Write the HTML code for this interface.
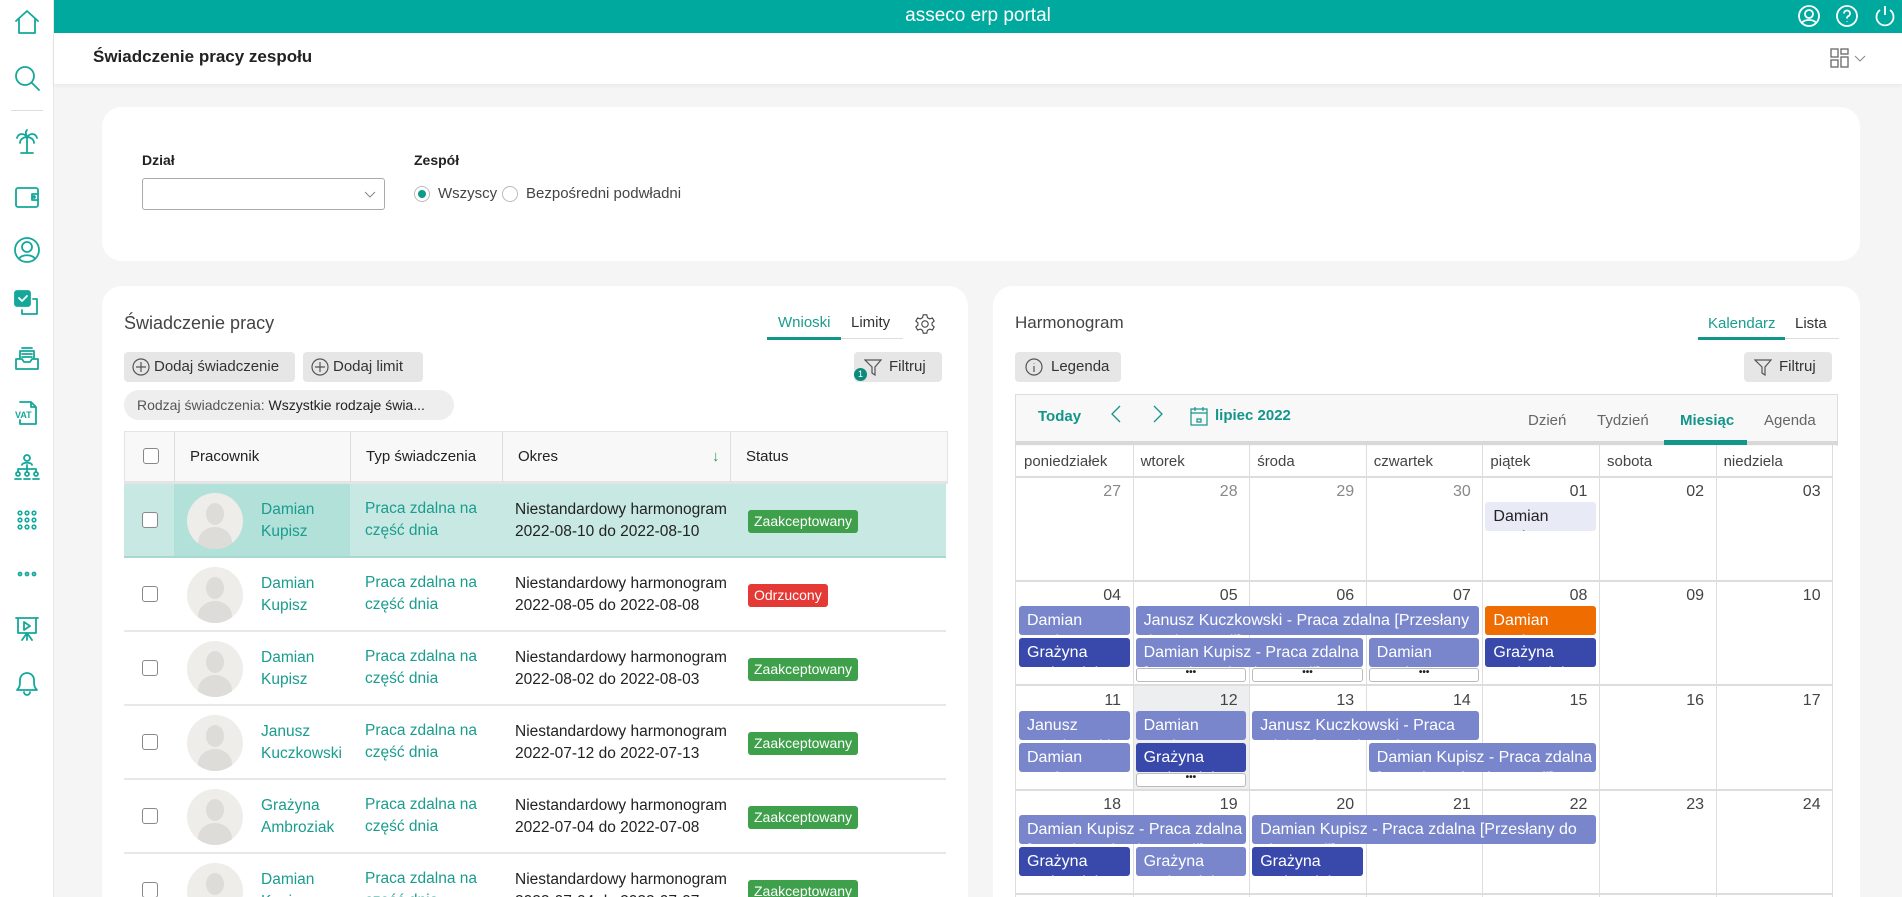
<!DOCTYPE html>
<html><head><meta charset="utf-8"><style>
*{box-sizing:border-box;margin:0;padding:0}
html{width:1902px;height:897px;overflow:hidden}
body{width:1902px;height:897px;overflow:hidden;background:#f5f5f5;font-family:"Liberation Sans",Arial,sans-serif;color:#222;position:relative}
.a{position:absolute}
.side{left:0;top:0;width:54px;height:897px;background:#fff;border-right:1px solid #e6e6e6}
.side svg{position:absolute;left:12px;width:30px;height:30px;fill:none;stroke:#14a89a;stroke-width:1.8;stroke-linecap:round;stroke-linejoin:round}
.top{left:54px;top:0;width:1848px;height:33px;background:#00a99d;color:#fff;text-align:center;font-size:19px;line-height:31px}
.top svg{position:absolute;top:4px;width:24px;height:24px;fill:none;stroke:#fff;stroke-width:1.8}
.hdr{left:54px;top:33px;width:1848px;height:51px;background:#fff;box-shadow:0 2px 4px rgba(0,0,0,.05)}
.card{background:#fff;border-radius:20px}
.btn{background:#e6e6e6;border-radius:4px;height:30px;font-size:15px;line-height:30px;color:#333;padding-left:30px}
.btn svg{position:absolute;left:8px;top:6px;width:18px;height:18px;fill:none;stroke:#555;stroke-width:1.2}
.th{top:431px;height:53px;background:#f8f8f8;border-top:1px solid #e4e4e4;border-bottom:3px solid #e4e4e4;font-size:15px;line-height:49px;color:#222}
.cb{width:16px;height:16px;border:1.5px solid #888;border-radius:3px;background:#fff}
.row{left:124px;width:822px;height:74px;border-bottom:2px solid #e8e8e8;font-size:15.5px;line-height:22px}
.av{left:63px;top:9px;width:56px;height:56px;border-radius:50%;background:#eeedea;overflow:hidden}
.av i{position:absolute;left:19px;top:10px;width:18px;height:22px;border-radius:50%;background:#dddcd8}
.av b{position:absolute;left:11px;top:34px;width:34px;height:30px;border-radius:50% 50% 0 0;background:#dddcd8}
.tl{color:#1a9c8e}
.bd{height:23px;line-height:23px;border-radius:3px;color:#fff;font-size:14px;padding:0 6px}
.ev{height:29px;border-radius:3px;color:#fff;font-size:16px;line-height:21px;padding:4px 0 0 8px;overflow:hidden;white-space:normal}
.L{background:#7986cb}.D{background:#3949ab}.O{background:#ef6c00}.P{background:#e8eaf6;color:#222}
.more{height:14px;border:1px solid #bbb;border-radius:3px;background:#fff;font-size:10px;line-height:8px;text-align:center;font-weight:bold;color:#222}
.dn{font-size:16px;color:#555;text-align:right;width:105px}
.vl{width:1px;background:#ddd}
.hl{height:1.5px;background:#ddd}
</style></head><body>

<div class="a side">
<svg style="top:7px" viewBox="0 0 30 30"><path d="M4 14L15 4l11 10M7 12v14h16V12"/></svg>
<svg style="top:63px" viewBox="0 0 30 30"><circle cx="13" cy="13" r="9"/><path d="M20 20l7 7"/></svg>
<div class="a" style="left:11px;top:110px;width:32px;height:1px;background:#ddd"></div>
<svg style="top:127px" viewBox="0 0 30 30"><path d="M15 10v15M9 26h12M15 10c-4-5-9-3-10 1M15 10c4-5 9-3 10 1M15 10c-3 0-7 2-7 6M15 10c3 0 7 2 7 6M15 10c-2-4-1-6 0-7"/></svg>
<svg style="top:182px" viewBox="0 0 30 30"><rect x="4" y="6" width="22" height="19" rx="2"/><path d="M26 12h-6v6h6"/><circle cx="22" cy="15" r="1"/></svg>
<svg style="top:235px" viewBox="0 0 30 30"><circle cx="15" cy="15" r="12"/><circle cx="15" cy="12" r="5"/><path d="M7 24c2-5 14-5 16 0"/></svg>
<svg style="top:288px" viewBox="0 0 30 30"><rect x="3" y="3" width="15" height="15" rx="2" fill="#14a89a"/><path d="M7 10l3 3 5-5" stroke="#fff"/><path d="M21 11h4v15H10v-4"/></svg>
<svg style="top:343px" viewBox="0 0 30 30"><path d="M4 16v10h22V16h-6l-2 3h-6l-2-3zM8 16V8h14v8M10 11h10M10 14h10M10 5h10"/></svg>
<svg style="top:398px" viewBox="0 0 30 30"><path d="M8 4h11l5 5v17H8v-4M19 4v5h5"/><text x="3" y="20" font-size="9" fill="#14a89a" stroke="none" font-weight="bold" font-family="Liberation Sans">VAT</text></svg>
<svg style="top:452px" viewBox="0 0 30 30"><circle cx="15" cy="6" r="3"/><path d="M10 13c0-3 10-3 10 0M15 13v4M6 17h18M6 17v3M24 17v3M15 17v3"/><circle cx="6" cy="22" r="2"/><circle cx="15" cy="22" r="2"/><circle cx="24" cy="22" r="2"/><path d="M3 27h6M12 27h6M21 27h6"/></svg>
<svg style="top:505px" viewBox="0 0 30 30"><g stroke-width="1.6"><circle cx="8" cy="8" r="1.8"/><circle cx="15" cy="8" r="1.8"/><circle cx="22" cy="8" r="1.8"/><circle cx="8" cy="15" r="1.8"/><circle cx="15" cy="15" r="1.8"/><circle cx="22" cy="15" r="1.8"/><circle cx="8" cy="22" r="1.8"/><circle cx="15" cy="22" r="1.8"/><circle cx="22" cy="22" r="1.8"/></g></svg>
<svg style="top:559px" viewBox="0 0 30 30"><circle cx="8" cy="15" r="1.5"/><circle cx="15" cy="15" r="1.5"/><circle cx="22" cy="15" r="1.5"/></svg>
<svg style="top:613px" viewBox="0 0 30 30"><path d="M4 5h22M6 5v15h18V5M12 9v8l6-4zM15 20v7M15 20l-5 7M15 20l5 7"/></svg>
<svg style="top:667px" viewBox="0 0 30 30"><path d="M5 23h20c-3-3-3-5-3-10a7 7 0 0 0-14 0c0 5 0 7-3 10zM12 25a3 3 0 0 0 6 0"/></svg>
</div>

<div class="a top">asseco erp portal
<svg style="left:1743px" viewBox="0 0 24 24"><circle cx="12" cy="12" r="10"/><circle cx="12" cy="10" r="4"/><path d="M5 19c2-4 12-4 14 0"/></svg>
<svg style="left:1781px" viewBox="0 0 24 24"><circle cx="12" cy="12" r="10"/><path d="M9 9.5a3 3 0 1 1 4 2.8c-1 .4-1 1.2-1 2.2M12 17v.5"/></svg>
<svg style="left:1819px" viewBox="0 0 24 24"><path d="M7 6a8.5 8.5 0 1 0 10 0M12 2v9"/></svg>
</div>

<div class="a hdr">
<div class="a" style="left:39px;top:14px;font-size:17px;font-weight:bold">Świadczenie pracy zespołu</div>
<svg class="a" style="left:1776px;top:15px" width="20" height="20" viewBox="0 0 20 20" fill="none" stroke="#666" stroke-width="1.3"><rect x="1" y="1" width="7" height="8"/><rect x="11" y="1" width="7" height="5"/><rect x="1" y="12" width="7" height="7"/><rect x="11" y="9" width="7" height="10"/></svg>
<svg class="a" style="left:1800px;top:22px" width="12" height="8" viewBox="0 0 12 8" fill="none" stroke="#888"><path d="M1 1l5 5 5-5"/></svg>
</div>

<div class="a card" style="left:102px;top:107px;width:1758px;height:154px">
<div class="a" style="left:40px;top:45px;font-size:14px;font-weight:bold">Dział</div>
<div class="a" style="left:40px;top:71px;width:243px;height:32px;border:1px solid #aaa;border-radius:3px"></div>
<svg class="a" style="left:262px;top:84px" width="12" height="8" viewBox="0 0 12 8" fill="none" stroke="#888"><path d="M1 1l5 5 5-5"/></svg>
<div class="a" style="left:312px;top:45px;font-size:14px;font-weight:bold">Zespół</div>
<div class="a" style="left:312px;top:79px;width:16px;height:16px;border:1px solid #bbb;border-radius:50%"><div class="a" style="left:3px;top:3px;width:8px;height:8px;border-radius:50%;background:#0e9b8c"></div></div>
<div class="a" style="left:336px;top:78px;font-size:15px;color:#444">Wszyscy</div>
<div class="a" style="left:400px;top:79px;width:16px;height:16px;border:1px solid #bbb;border-radius:50%"></div>
<div class="a" style="left:424px;top:78px;font-size:15px;color:#444">Bezpośredni podwładni</div>
</div>

<div class="a card" style="left:102px;top:286px;width:866px;height:611px;border-radius:20px 20px 0 0"></div>
<div class="a" style="left:124px;top:313px;font-size:18px;color:#444">Świadczenie pracy</div>
<div class="a tl" style="left:778px;top:314px;font-size:15px">Wnioski</div>
<div class="a" style="left:851px;top:314px;font-size:15px;color:#333">Limity</div>
<div class="a" style="left:767px;top:337px;width:74px;height:3px;background:#14958a"></div>
<div class="a" style="left:841px;top:338px;width:62px;height:1px;background:#ddd"></div>
<svg class="a" style="left:914px;top:313px" width="22" height="22" viewBox="0 0 24 24" fill="none" stroke="#444" stroke-width="1.2"><circle cx="12" cy="12" r="3.5"/><path d="M10 2h4l.6 3 2.5 1.4 2.9-1 2 3.4-2.3 2v2.4l2.3 2-2 3.4-2.9-1-2.5 1.4-.6 3h-4l-.6-3-2.5-1.4-2.9 1-2-3.4 2.3-2v-2.4l-2.3-2 2-3.4 2.9 1L9.4 5z"/></svg>
<div class="a btn" style="left:124px;top:352px;width:171px"><svg viewBox="0 0 18 18"><circle cx="9" cy="9" r="8"/><path d="M9 4v10M4 9h10"/></svg>Dodaj świadczenie</div>
<div class="a btn" style="left:303px;top:352px;width:120px"><svg viewBox="0 0 18 18"><circle cx="9" cy="9" r="8"/><path d="M9 4v10M4 9h10"/></svg>Dodaj limit</div>
<div class="a btn" style="left:854px;top:352px;width:88px;padding-left:35px"><svg style="left:10px" viewBox="0 0 18 18"><path d="M1 2h16l-6 7v8l-3-2V9z"/></svg>Filtruj</div>
<div class="a" style="left:854px;top:368px;width:13px;height:13px;border-radius:50%;background:#0e8a7c;color:#fff;font-size:9px;line-height:13px;text-align:center">1</div>
<div class="a" style="left:124px;top:390px;width:330px;height:30px;background:#eee;border-radius:15px;font-size:14px;line-height:30px;padding-left:13px;color:#555;white-space:nowrap">Rodzaj świadczenia: <span style="color:#222">Wszystkie rodzaje świa...</span></div>

<div class="a th" style="left:124px;width:824px;border-left:1px solid #e4e4e4;border-right:1px solid #e4e4e4">
<div class="a cb" style="left:18px;top:16px"></div>
<div class="a vl" style="left:49px;top:0;height:50px"></div>
<div class="a" style="left:65px">Pracownik</div>
<div class="a vl" style="left:225px;top:0;height:50px"></div>
<div class="a" style="left:241px">Typ świadczenia</div>
<div class="a vl" style="left:377px;top:0;height:50px"></div>
<div class="a" style="left:393px">Okres</div>
<div class="a" style="left:587px;color:#2aa14a">↓</div>
<div class="a vl" style="left:605px;top:0;height:50px"></div>
<div class="a" style="left:621px">Status</div>
</div>

<div class="a row" style="top:484px;background:#c8e9e3;border-bottom-color:#a8d9d1"><div class="a" style="left:50px;top:0;width:176px;height:72px;background:#b2e1da"></div>
<div class="a cb" style="left:18px;top:28px"></div><div class="a av"><i></i><b></b></div><div class="a tl" style="left:137px;top:15px">Damian<br>Kupisz</div><div class="a tl" style="left:241px;top:14px">Praca zdalna na<br>część dnia</div><div class="a" style="left:391px;top:15px">Niestandardowy harmonogram<br>2022-08-10 do 2022-08-10</div><div class="a bd" style="left:624px;top:26px;background:#3ea04a">Zaakceptowany</div></div>
<div class="a row" style="top:558px"><div class="a cb" style="left:18px;top:28px"></div><div class="a av"><i></i><b></b></div><div class="a tl" style="left:137px;top:15px">Damian<br>Kupisz</div><div class="a tl" style="left:241px;top:14px">Praca zdalna na<br>część dnia</div><div class="a" style="left:391px;top:15px">Niestandardowy harmonogram<br>2022-08-05 do 2022-08-08</div><div class="a bd" style="left:624px;top:26px;background:#e53935">Odrzucony</div></div>
<div class="a row" style="top:632px"><div class="a cb" style="left:18px;top:28px"></div><div class="a av"><i></i><b></b></div><div class="a tl" style="left:137px;top:15px">Damian<br>Kupisz</div><div class="a tl" style="left:241px;top:14px">Praca zdalna na<br>część dnia</div><div class="a" style="left:391px;top:15px">Niestandardowy harmonogram<br>2022-08-02 do 2022-08-03</div><div class="a bd" style="left:624px;top:26px;background:#3ea04a">Zaakceptowany</div></div>
<div class="a row" style="top:706px"><div class="a cb" style="left:18px;top:28px"></div><div class="a av"><i></i><b></b></div><div class="a tl" style="left:137px;top:15px">Janusz<br>Kuczkowski</div><div class="a tl" style="left:241px;top:14px">Praca zdalna na<br>część dnia</div><div class="a" style="left:391px;top:15px">Niestandardowy harmonogram<br>2022-07-12 do 2022-07-13</div><div class="a bd" style="left:624px;top:26px;background:#3ea04a">Zaakceptowany</div></div>
<div class="a row" style="top:780px"><div class="a cb" style="left:18px;top:28px"></div><div class="a av"><i></i><b></b></div><div class="a tl" style="left:137px;top:15px">Grażyna<br>Ambroziak</div><div class="a tl" style="left:241px;top:14px">Praca zdalna na<br>część dnia</div><div class="a" style="left:391px;top:15px">Niestandardowy harmonogram<br>2022-07-04 do 2022-07-08</div><div class="a bd" style="left:624px;top:26px;background:#3ea04a">Zaakceptowany</div></div>
<div class="a row" style="top:854px;height:43px;overflow:hidden;border:0"><div class="a cb" style="left:18px;top:28px"></div><div class="a av"><i></i><b></b></div><div class="a tl" style="left:137px;top:15px">Damian<br>Kupisz</div><div class="a tl" style="left:241px;top:14px">Praca zdalna na<br>część dnia</div><div class="a" style="left:391px;top:15px">Niestandardowy harmonogram<br>2022-07-04 do 2022-07-07</div><div class="a bd" style="left:624px;top:26px;background:#3ea04a">Zaakceptowany</div></div>

<div class="a card" style="left:993px;top:286px;width:867px;height:611px;border-radius:20px 20px 0 0"></div>
<div class="a" style="left:1015px;top:313px;font-size:17px;color:#444">Harmonogram</div>
<div class="a tl" style="left:1708px;top:315px;font-size:15px">Kalendarz</div>
<div class="a" style="left:1795px;top:315px;font-size:15px;color:#333">Lista</div>
<div class="a" style="left:1698px;top:337px;width:87px;height:3px;background:#14958a"></div>
<div class="a" style="left:1785px;top:338px;width:54px;height:1px;background:#ddd"></div>
<div class="a btn" style="left:1015px;top:352px;width:106px;padding-left:36px"><svg style="left:10px" viewBox="0 0 18 18"><circle cx="9" cy="9" r="8"/><path d="M9 8v6M9 5v.5"/></svg>Legenda</div>
<div class="a btn" style="left:1744px;top:352px;width:88px;padding-left:35px"><svg style="left:10px" viewBox="0 0 18 18"><path d="M1 2h16l-6 7v8l-3-2V9z"/></svg>Filtruj</div>

<div class="a" style="left:1015px;top:394px;width:823px;height:52px;background:#f8f8f8;border:1px solid #ddd;border-bottom:0"></div>
<div class="a" style="left:1015px;top:441px;width:823px;height:4px;background:#d8d8d8"></div>
<div class="a" style="left:1664px;top:440px;width:83px;height:5px;background:#14958a"></div>
<div class="a tl" style="left:1038px;top:408px;font-size:15px;font-weight:bold;color:#14958a">Today</div>
<svg class="a" style="left:1110px;top:404px" width="12" height="20" viewBox="0 0 12 20" fill="none" stroke="#14958a" stroke-width="1.3"><path d="M10 2L2 10l8 8"/></svg>
<svg class="a" style="left:1152px;top:404px" width="12" height="20" viewBox="0 0 12 20" fill="none" stroke="#14958a" stroke-width="1.3"><path d="M2 2l8 8-8 8"/></svg>
<svg class="a" style="left:1190px;top:406px" width="18" height="20" viewBox="0 0 18 20" fill="none" stroke="#14958a" stroke-width="1.2"><rect x="1" y="3" width="16" height="16"/><path d="M1 7h16M5 1v4M13 1v4M7 13h4v3H7z"/></svg>
<div class="a" style="left:1215px;top:407px;font-size:15px;font-weight:bold;color:#14958a">lipiec 2022</div>
<div class="a" style="left:1528px;top:412px;font-size:15px;color:#666">Dzień</div>
<div class="a" style="left:1597px;top:412px;font-size:15px;color:#666">Tydzień</div>
<div class="a" style="left:1680px;top:412px;font-size:15px;color:#14958a;font-weight:bold">Miesiąc</div>
<div class="a" style="left:1764px;top:412px;font-size:15px;color:#666">Agenda</div>

<div id="cal" class="a" style="left:1015px;top:445px;width:823px;height:452px;border-left:1px solid #ddd;font-size:15px;overflow:hidden"></div>
<script>
var c=document.getElementById('cal'),W=116.6,h='';
var days=['poniedziałek','wtorek','środa','czwartek','piątek','sobota','niedziela'];
for(var i=0;i<7;i++)h+='<div class="a" style="left:'+(i*W+8)+'px;top:8px;color:#444;font-size:15px">'+days[i]+'</div>';
h+='<div class="a hl" style="left:0;top:31px;width:816px"></div>';
h+='<div class="a" style="left:'+(W+1)+'px;top:240px;width:'+(W-1)+'px;height:104px;background:#eceef0"></div>';
for(var i=1;i<7;i++)h+='<div class="a vl" style="left:'+(i*W)+'px;top:0;height:452px"></div>';
h+='<div class="a vl" style="left:816px;top:0;height:452px"></div>';
var tops=[31,135,240,344],nums=[['27','28','29','30','01','02','03'],['04','05','06','07','08','09','10'],['11','12','13','14','15','16','17'],['18','19','20','21','22','23','24']];
for(var r=0;r<4;r++){h+='<div class="a hl" style="left:0;top:'+(tops[r]+104)+'px;width:816px"></div>';
for(var i=0;i<7;i++)h+='<div class="a dn" style="left:'+(i*W)+'px;top:'+(tops[r]+7)+'px;color:'+(r==0&&i<4?'#888':'#444')+'">'+nums[r][i]+'</div>';}
function ev(r,c0,n,b,cls,t){h+='<div class="a ev '+cls+'" style="left:'+(c0*W+3)+'px;top:'+(tops[r]+(b?58:26))+'px;width:'+(n*W-6)+'px">'+t+'</div>';}
function mo(r,c0){h+='<div class="a more" style="left:'+(c0*W+3)+'px;top:'+(tops[r]+88)+'px;width:'+(W-6)+'px">•••</div>';}
var JK='Janusz Kuczkowski - Praca zdalna [Przesłany do akceptacji]',DK='Damian Kupisz - Praca zdalna [Przesłany do akceptacji]';
ev(0,4,1,0,'P','Damian Kupisz');
ev(1,0,1,0,'L','Damian Kupisz');ev(1,1,3,0,'L',JK);ev(1,4,1,0,'O','Damian Kupisz');
ev(1,0,1,1,'D','Grażyna Ambroziak');ev(1,1,2,1,'L',DK);ev(1,3,1,1,'L','Damian Kupisz');ev(1,4,1,1,'D','Grażyna Ambroziak');
mo(1,1);mo(1,2);mo(1,3);
ev(2,0,1,0,'L','Janusz Kuczkowski');ev(2,1,1,0,'L','Damian Kupisz');ev(2,2,2,0,'L',JK);
ev(2,0,1,1,'L','Damian Kupisz');ev(2,1,1,1,'D','Grażyna Ambroziak');ev(2,3,2,1,'L',DK);mo(2,1);
ev(3,0,2,0,'L',DK);ev(3,2,3,0,'L',DK);
ev(3,0,1,1,'D','Grażyna Ambroziak');ev(3,1,1,1,'L','Grażyna Ambroziak');ev(3,2,1,1,'D','Grażyna Ambroziak');
c.innerHTML=h;
</script>
</body></html>
